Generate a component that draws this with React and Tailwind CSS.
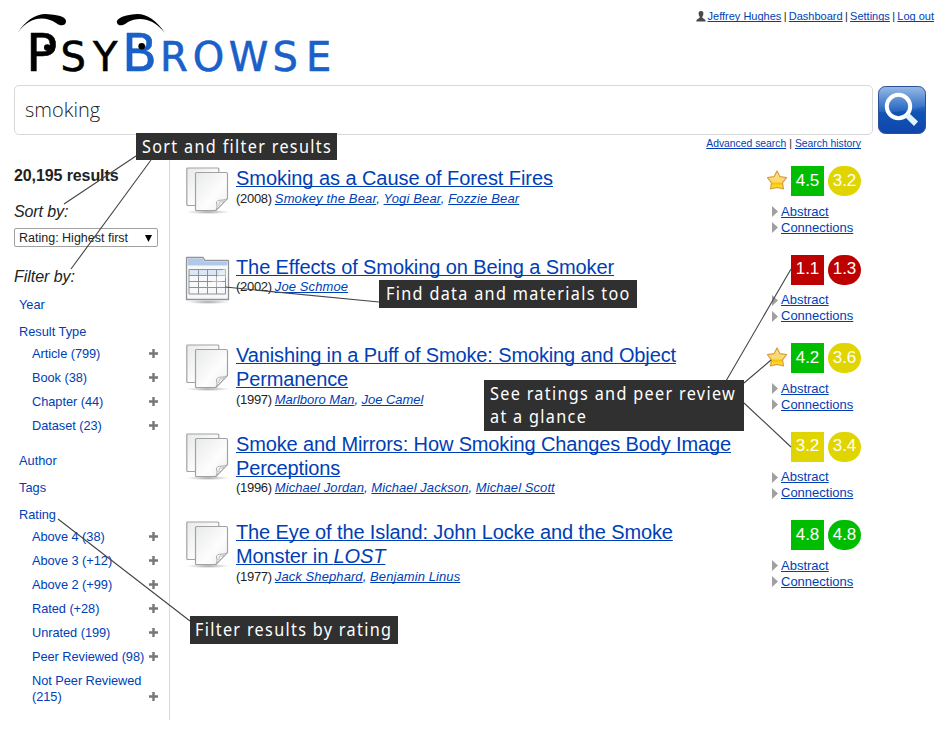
import React from "react";

const link = "text-[#003eb5] underline underline-offset-1 decoration-1 [text-decoration-skip-ink:none]";

function Logo() {
  return (
    <svg className="block h-[85px] w-[345px]" viewBox="0 0 345 85" fontFamily="'DejaVu Sans', sans-serif">
      <path d="M17.500 33C27 18 39 12 51 14.500C58 15 67 17 66 22C65 26.500 60 26 56 23C45 16 30 16 17.500 33Z" />
      <path d="M165 33C155 18 144 12 132 14.500C125 15.500 115.500 18 117 23C118.500 26.500 123 26 128 22C138 17 152 17 165 33Z" />
      <text y="71" stroke="#000" strokeWidth="0.600">
        <tspan x="25.900" fontSize="52">P</tspan>
        <tspan x="60.400 93" fontSize="40">SY</tspan>
        <tspan x="121.900" fontSize="51" fill="#1a60c8" stroke="#1a60c8">B</tspan>
        <tspan x="160.100 192.800 228.700 272.400 306.100" fontSize="40" fill="#1a60c8" stroke="#1a60c8">ROWSE</tspan>
      </text>
      <circle cx="47.300" cy="47.500" r="3.300" />
      <circle cx="141.700" cy="46.300" r="3.300" />
    </svg>
  );
}

function UserIcon() {
  return (
    <svg className="mr-[2px] h-[11px] w-[10px]" viewBox="0 0 10 11" fill="#4a4a4a">
      <path d="M5 0C7.300 0 7.700 1.700 7.300 3.500C7 5 6.300 5.500 6.200 6.300C6.300 7.600 9.700 7.700 9.700 10.500H0.300C.3 7.700 3.700 7.600 3.800 6.300C3.700 5.500 3 5 2.700 3.500C2.300 1.700 2.700 0 5 0Z" />
    </svg>
  );
}

function SearchButton() {
  return (
    <button className="h-[48px] w-[48px]" aria-label="Search">
      <svg viewBox="0 0 48 48" className="block h-[48px] w-[48px]">
        <defs>
          <linearGradient id="btn" x1="0" y1="0" x2="0" y2="1">
            <stop offset="0" stopColor="#8fb5e4" />
            <stop offset="0.450" stopColor="#2566c2" />
            <stop offset="0.550" stopColor="#1253b6" />
            <stop offset="1" stopColor="#1046ac" />
          </linearGradient>
        </defs>
        <rect x="0.500" y="0.500" width="47" height="47" rx="7" fill="url(#btn)" stroke="#2a5397" />
        <path d="M1 26Q28 27 47 20V8Q47 1 40 1H8Q1 1 1 8Z" fill="#fff" opacity="0.080" />
        <circle cx="20.500" cy="20.500" r="11.700" fill="none" stroke="#fff" strokeWidth="4" />
        <path d="M28 29L31 27L40 35.500L36 40L27.500 31.500Z" fill="#e0f7ff" />
      </svg>
    </button>
  );
}

function PagesIcon() {
  return (
    <svg viewBox="0 0 46 50" className="block h-[50px] w-[46px]">
      <defs>
        <linearGradient id="page" x1="0" y1="0" x2="1" y2="1">
          <stop offset="0" stopColor="#e8e9e9" />
          <stop offset="0.600" stopColor="#fdfdfd" />
          <stop offset="1" stopColor="#eeeeee" />
        </linearGradient>
        <radialGradient id="shade">
          <stop offset="0" stopColor="#777" stopOpacity="0.700" />
          <stop offset="1" stopColor="#999" stopOpacity="0" />
        </radialGradient>
      </defs>
      <ellipse cx="23" cy="46" rx="22" ry="2.200" fill="url(#shade)" />
      <rect x="1.800" y="2" width="32" height="37.500" rx="1" fill="url(#page)" stroke="#a2a2a2" strokeWidth="1.200" />
      <path d="M11.500 6.500H41Q42.500 6.500 42.500 8V32.500L31 44.500H11.500Q10.500 44.500 10.500 43.500V7.500Q10.500 6.500 11.500 6.500Z" fill="url(#page)" stroke="#a2a2a2" strokeWidth="1.200" />
      <path d="M31 44C33 41 31.500 39 31.500 36C34 33 38 35 42 33Z" fill="#f6f6f6" stroke="#a8a8a8" />
      <path d="M33.500 40C35 38.500 33.500 37 35 36C36 35.500 37.500 36.500 39 35" fill="none" stroke="#bbb" />
    </svg>
  );
}

function TableIcon() {
  return (
    <svg viewBox="0 0 46 50" className="block h-[50px] w-[46px]">
      <ellipse cx="23" cy="47" rx="22" ry="2.200" fill="url(#shade)" />
      <path d="M2 2.500H18L20 5.500H43Q43.500 5.500 43.500 6V44.500H1.500V3Q1.500 2.500 2 2.500Z" fill="#f7f8f9" stroke="#929497" strokeWidth="1.300" />
      <path d="M2.500 3.500H17.500L19.500 6.500H42.500V10.500H2.500Z" fill="#b1c9e9" />
      <rect x="4" y="14.500" width="36.500" height="6" fill="#dbe7f6" />
      <path d="M4 14.500H40.500V39H4ZM4 20.500H40.500M4 26.500H40.500M4 32.500H40.500M13.500 14.500V39M22.500 14.500V39M31.500 14.500V39" fill="none" stroke="#8e9297" />
      <path d="M43 9L22 32L32 32L43 20Z" fill="#fff" opacity="0.350" />
    </svg>
  );
}

function Star() {
  return (
    <svg viewBox="0 0 22 22" className="mr-[3px] h-[22px] w-[22px]">
      <defs>
        <linearGradient id="star" x1="0" y1="0" x2="0" y2="1">
          <stop offset="0" stopColor="#fbe08a" />
          <stop offset="0.600" stopColor="#fbd96c" />
          <stop offset="0.700" stopColor="#f5c400" />
          <stop offset="1" stopColor="#fff04a" />
        </linearGradient>
      </defs>
      <path d="M11 1L14 6.700L20.500 7.700L16.500 12.800L17.500 18.800L11 17.300L4.500 18.800L5.500 12.800L1.500 7.700L8 6.700Z" fill="url(#star)" stroke="#d99f3c" strokeWidth="1.200" strokeLinejoin="round" />
    </svg>
  );
}

const sections = [
  { name: "Year", items: [] },
  { name: "Result Type", items: ["Article (799)", "Book (38)", "Chapter (44)", "Dataset (23)"] },
  { name: "Author", items: [] },
  { name: "Tags", items: [] },
  {
    name: "Rating",
    items: ["Above 4 (38)", "Above 3 (+12)", "Above 2 (+99)", "Rated (+28)", "Unrated (199)", "Peer Reviewed (98)", "Not Peer Reviewed (215)"],
  },
];

const GREEN = "bg-[#00bd00]";
const YELLOW = "bg-[#e0d500]";
const RED = "bg-[#bd0000]";

const results = [
  { title: "Smoking as a Cause of Forest Fires", year: 2008, authors: ["Smokey the Bear", "Yogi Bear", "Fozzie Bear"], a: ["4.5", GREEN], b: ["3.2", YELLOW], star: true, tt: "tracking-[-0.06px]", at: "tracking-[0.16px]" },
  { title: "The Effects of Smoking on Being a Smoker", year: 2002, authors: ["Joe Schmoe"], a: ["1.1", RED], b: ["1.3", RED], table: true, tt: "tracking-[-0.1px]", at: "tracking-[0.1px]" },
  { title: "Vanishing in a Puff of Smoke: Smoking and Object Permanence", year: 1997, authors: ["Marlboro Man", "Joe Camel"], a: ["4.2", GREEN], b: ["3.6", YELLOW], star: true, tt: "tracking-[-0.13px]", at: "tracking-[-0.05px]" },
  { title: "Smoke and Mirrors: How Smoking Changes Body Image Perceptions", year: 1996, authors: ["Michael Jordan", "Michael Jackson", "Michael Scott"], a: ["3.2", YELLOW], b: ["3.4", YELLOW], tt: "tracking-[-0.13px]", at: "tracking-[0.07px]" },
  { title: <>The Eye of the Island: John Locke and the Smoke Monster in <i>LOST</i></>, year: 1977, authors: ["Jack Shephard", "Benjamin Linus"], a: ["4.8", GREEN], b: ["4.8", GREEN], tt: "tracking-[-0.12px]", at: "tracking-[0.09px]" },
];

function FilterItem({ label }) {
  return (
    <div className="flex items-end justify-between py-1 leading-4">
      <span className="max-w-[115px] tracking-[-0.05px]">{label}</span>
      <svg className="mb-[4px] h-[9px] w-[9px] shrink-0" viewBox="0 0 9 9">
        <path d="M4.500 0V9M0 4.500H9" stroke="#777" strokeWidth="2.400" />
      </svg>
    </div>
  );
}

function Sidebar() {
  return (
    <aside className="h-[560px] w-[156px] shrink-0 border-r border-[#d8d8d8] pr-[11px] text-[#222]">
      <div className="pt-[6px] text-base leading-5 font-bold tracking-[-0.1px]">20,195 results</div>
      <div className="mt-4 text-base leading-5 tracking-[-0.1px] italic">Sort by:</div>
      <div className="mt-[6px] flex h-[19px] items-center justify-between rounded-[2px] border border-[#a0a0a0] pt-px pr-[5px] pl-1 text-[12.5px]">
        <span>Rating: Highest first</span>
        <svg className="h-[7px] w-[7px]" viewBox="0 0 7 7"><path d="M0 0H7L3.500 7Z" /></svg>
      </div>
      <div className="mt-[20px] text-base leading-5 tracking-[-0.05px] italic">Filter by:</div>
      <nav className="mt-[5px] pl-[5px] text-[12.8px] text-[#003eb5]">
        {sections.map((s) => (
          <div key={s.name}>
            <div className="pt-[5px] pb-[6px] leading-4">{s.name}</div>
            {s.items.length > 0 && (
              <div className="-mt-1 mb-[10px] pl-[13px]">
                {s.items.map((i) => <FilterItem key={i} label={i} />)}
              </div>
            )}
          </div>
        ))}
      </nav>
    </aside>
  );
}

function Result({ r }) {
  return (
    <article className="flex h-[88.5px] items-start">
      <div className="w-[51px] shrink-0">{r.table ? <TableIcon /> : <PagesIcon />}</div>
      <div className="w-[510px] shrink-0">
        <h2 className={"text-[20px] leading-6 " + r.tt}><a className={link}>{r.title}</a></h2>
        <p className="pt-[0.700px] text-[13px] leading-4 text-[#222]">
          <span className="mr-[3px] tracking-[-0.3px]">({r.year})</span>
          <span className={r.at}>
            {r.authors.map((a, i) => (
              <React.Fragment key={a}>
                {i > 0 && <i className="text-[#003eb5]">, </i>}
                <a className={link + " italic"}>{a}</a>
              </React.Fragment>
            ))}
          </span>
        </p>
      </div>
      <div className="flex w-[115px] shrink-0 flex-col">
        <div className="flex h-[30px] items-center justify-end">
          {r.star && <Star />}
          <span className={"flex h-[30px] w-[33px] items-center justify-center pb-px text-[17px] text-white " + r.a[1]}>{r.a[0]}</span>
          <span className={"ml-1 flex h-[30px] w-[33px] items-center justify-center rounded-[15px] pb-px text-[17px] text-white " + r.b[1]}>{r.b[0]}</span>
        </div>
        <div className="mt-[7.600px] pl-[26px] text-[13px] leading-4">
          {["Abstract", "Connections"].map((t) => (
            <div key={t} className="flex items-center">
              <svg className="mr-[3px] h-[11px] w-[6px]" viewBox="0 0 6 11"><path d="M0 0L6 5.500L0 11Z" fill="#a0a0a0" /></svg>
              <a className={link}>{t}</a>
            </div>
          ))}
        </div>
      </div>
    </article>
  );
}

const callout = "absolute bg-[#303030] text-white font-['Noto_Sans',sans-serif] text-[18px] whitespace-nowrap";
const calloutText = "block origin-left scale-x-90 tracking-[1.47px]";

function Callouts() {
  return (
    <>
      <svg className="pointer-events-none absolute top-0 left-0 h-[733px] w-[945px]" viewBox="0 0 945 733">
        <path
          d="M136 156L64 204M151 160L71 269M225 287L379 302M791 269L726 381M744 383L771 360M744 403L791 447M58 519L190 621"
          fill="none" stroke="#444" strokeWidth="1.100"
        />
      </svg>
      <div className={callout + " top-[133px] left-[136px] h-[27px] w-[201px] pl-[6px] leading-[26px]"}><span className={calloutText}>Sort and filter results</span></div>
      <div className={callout + " top-[280px] left-[379px] h-[28px] w-[258px] pl-[7px] leading-[27px]"}><span className={calloutText}>Find data and materials too</span></div>
      <div className={callout + " top-[380px] left-[484px] h-[51px] w-[260px] pt-[2px] pl-[6px] leading-[23px]"}><span className={calloutText}>See ratings and peer review<br />at a glance</span></div>
      <div className={callout + " top-[616px] left-[190px] h-[28px] w-[208px] pl-[5px] leading-[26px]"}><span className={calloutText}>Filter results by rating</span></div>
    </>
  );
}

export default function App() {
  return (
    <div className="relative h-[733px] w-[945px] overflow-hidden bg-white font-['Liberation_Sans',Arial,sans-serif]">
      <header className="flex h-[85px] justify-between pr-[11px]">
        <Logo />
        <div className="flex h-8 items-center text-[11px] text-[#222]">
          <UserIcon />
          <a className={link}>Jeffrey Hughes</a><span className="mx-[2.300px]">|</span>
          <a className={link}>Dashboard</a><span className="mx-[2.300px]">|</span>
          <a className={link}>Settings</a><span className="mx-[2.300px]">|</span>
          <a className={link}>Log out</a>
        </div>
      </header>
      <div className="flex items-center gap-[5px] pl-[14px]">
        <div className="flex h-[50px] w-[859px] items-center rounded-[5px] border border-[#d8d8d8] pl-[10px] font-['Open_Sans',sans-serif] text-[20px] font-light text-[#222]">smoking</div>
        <SearchButton />
      </div>
      <div className="flex h-[18px] items-center justify-end pr-[84px] text-[10.35px] text-[#222]">
        <a className={link}>Advanced search</a><span className="mx-[3px]">|</span><a className={link}>Search history</a>
      </div>
      <div className="flex items-start pt-[7px] pl-[14px]">
        <Sidebar />
        <main className="pt-[6.200px] pl-[15px]">
          {results.map((r) => <Result key={r.year} r={r} />)}
        </main>
      </div>
      <Callouts />
    </div>
  );
}
